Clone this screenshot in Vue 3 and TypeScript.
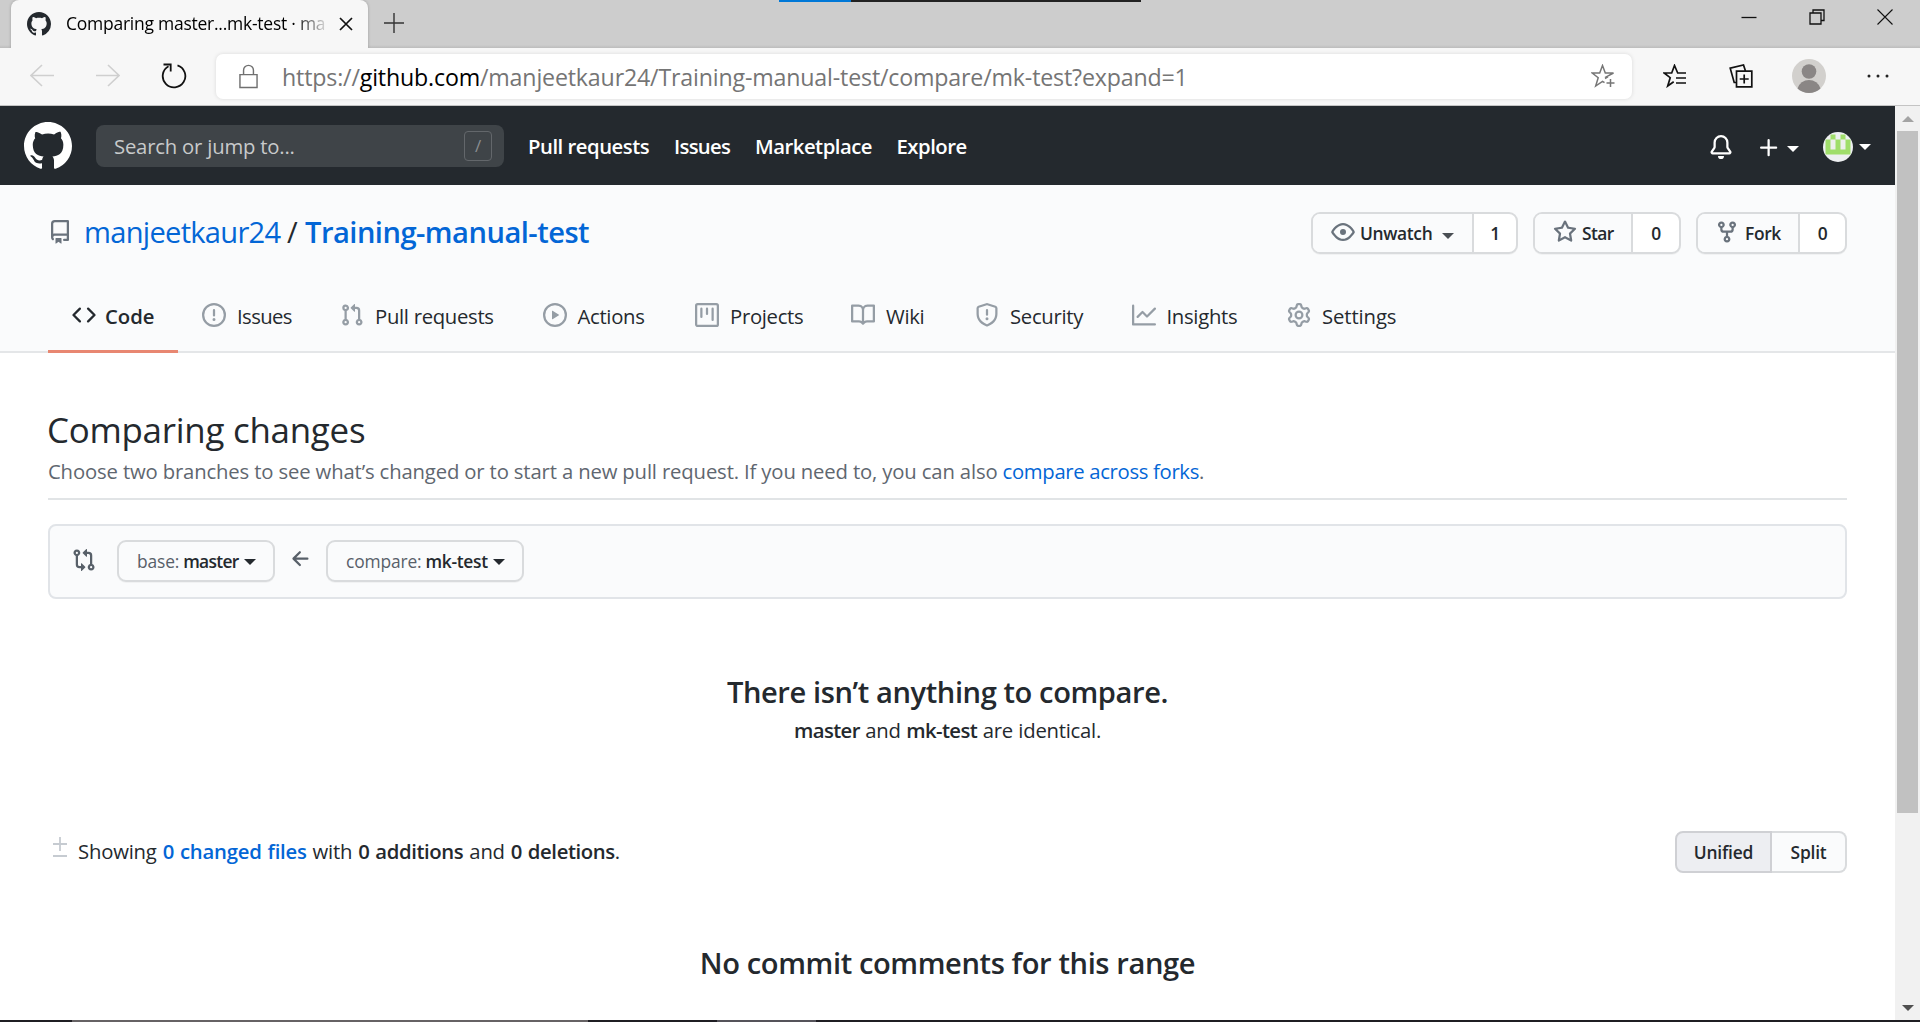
<script setup lang="ts">
interface Tab {
  label: string
  icon: string
  width: number
}

const icons: Record<string, string> = {
  github:
    'M8 0C3.58 0 0 3.58 0 8c0 3.54 2.29 6.53 5.47 7.59.4.07.55-.17.55-.38 0-.19-.01-.82-.01-1.49-2.01.37-2.53-.49-2.69-.94-.09-.23-.48-.94-.82-1.13-.28-.15-.68-.52-.01-.53.63-.01 1.08.58 1.23.82.72 1.21 1.87.87 2.33.66.07-.52.28-.87.51-1.07-1.78-.2-3.64-.89-3.64-3.95 0-.87.31-1.59.82-2.15-.08-.2-.36-1.02.08-2.12 0 0 .67-.21 2.2.82.64-.18 1.32-.27 2-.27.68 0 1.36.09 2 .27 1.53-1.04 2.2-.82 2.2-.82.44 1.1.16 1.92.08 2.12.51.56.82 1.27.82 2.15 0 3.07-1.87 3.75-3.65 3.95.29.25.54.73.54 1.48 0 1.07-.01 1.93-.01 2.2 0 .21.15.46.55.38A8.013 8.013 0 0016 8c0-4.42-3.58-8-8-8z',
  code: 'M4.72 3.22a.75.75 0 011.06 1.06L2.06 8l3.72 3.72a.75.75 0 11-1.06 1.06L.47 8.53a.75.75 0 010-1.06l4.25-4.25zm6.56 0a.75.75 0 10-1.06 1.06L13.94 8l-3.72 3.72a.75.75 0 101.06 1.06l4.25-4.25a.75.75 0 000-1.06l-4.25-4.25z',
  issue:
    'M8 1.5a6.5 6.5 0 100 13 6.5 6.5 0 000-13zM0 8a8 8 0 1116 0A8 8 0 010 8zm9 3a1 1 0 11-2 0 1 1 0 012 0zm-.25-6.25a.75.75 0 00-1.5 0v3.5a.75.75 0 001.5 0v-3.5z',
  pull: 'M7.177 3.073L9.573.677A.25.25 0 0110 .854v4.792a.25.25 0 01-.427.177L7.177 3.427a.25.25 0 010-.354zM3.75 2.5a.75.75 0 100 1.5.75.75 0 000-1.5zm-2.25.75a2.25 2.25 0 113 2.122v5.256a2.251 2.251 0 11-1.5 0V5.372A2.25 2.25 0 011.5 3.25zM11 2.5h-1V4h1a1 1 0 011 1v5.628a2.251 2.251 0 101.5 0V5A2.5 2.5 0 0011 2.5zm1 10.25a.75.75 0 111.5 0 .75.75 0 01-1.5 0zM3.75 12a.75.75 0 100 1.5.75.75 0 000-1.5z',
  play: 'M1.5 8a6.5 6.5 0 1113 0 6.5 6.5 0 01-13 0zM8 0a8 8 0 100 16A8 8 0 008 0zM6.379 5.227A.25.25 0 006 5.442v5.117a.25.25 0 00.379.214l4.264-2.559a.25.25 0 000-.428L6.379 5.227z',
  project:
    'M1.75 0A1.75 1.75 0 000 1.75v12.5C0 15.216.784 16 1.75 16h12.5A1.75 1.75 0 0016 14.25V1.75A1.75 1.75 0 0014.25 0H1.75zM1.5 1.75a.25.25 0 01.25-.25h12.5a.25.25 0 01.25.25v12.5a.25.25 0 01-.25.25H1.75a.25.25 0 01-.25-.25V1.75zM11.75 3a.75.75 0 00-.75.75v7.5a.75.75 0 001.5 0v-7.5a.75.75 0 00-.75-.75zm-8.25.75a.75.75 0 011.5 0v5.5a.75.75 0 01-1.5 0v-5.5zM8 3a.75.75 0 00-.75.75v3.5a.75.75 0 001.5 0v-3.5A.75.75 0 008 3z',
  book: 'M0 1.75A.75.75 0 01.75 1h4.253c1.227 0 2.317.59 3 1.501A3.744 3.744 0 0111.006 1h4.245a.75.75 0 01.75.75v10.5a.75.75 0 01-.75.75h-4.507a2.25 2.25 0 00-1.591.659l-.622.621a.75.75 0 01-1.06 0l-.622-.621A2.25 2.25 0 005.258 13H.75a.75.75 0 01-.75-.75V1.75zm8.755 3a2.25 2.25 0 012.25-2.25H14.5v9h-3.757c-.71 0-1.4.201-1.992.572l.004-7.322zm-1.504 7.324l.004-5.073-.002-2.253A2.25 2.25 0 005.003 2.5H1.5v9h3.757a3.75 3.75 0 011.994.574z',
  shield:
    'M7.467.133a1.75 1.75 0 011.066 0l5.25 1.68A1.75 1.75 0 0115 3.48V7c0 1.566-.32 3.182-1.303 4.682-.983 1.498-2.585 2.813-5.032 3.855a1.7 1.7 0 01-1.33 0c-2.447-1.042-4.049-2.357-5.032-3.855C1.32 10.182 1 8.566 1 7V3.48a1.75 1.75 0 011.217-1.667l5.25-1.68zm.61 1.429a.25.25 0 00-.153 0l-5.25 1.68a.25.25 0 00-.174.238V7c0 1.358.275 2.666 1.057 3.86.784 1.194 2.121 2.34 4.366 3.297a.2.2 0 00.154 0c2.245-.956 3.582-2.104 4.366-3.298C13.225 9.666 13.5 8.36 13.5 7V3.48a.25.25 0 00-.174-.237l-5.25-1.68zM9 10.5a1 1 0 11-2 0 1 1 0 012 0zm-.25-5.75a.75.75 0 10-1.5 0v3a.75.75 0 001.5 0v-3z',
  graph:
    'M1.5 1.75a.75.75 0 00-1.5 0v12.5c0 .414.336.75.75.75h14.5a.75.75 0 000-1.5H1.5V1.75zm14.28 2.53a.75.75 0 00-1.06-1.06L10 7.94 7.53 5.47a.75.75 0 00-1.06 0L3.22 8.72a.75.75 0 001.06 1.06L7 7.06l2.47 2.47a.75.75 0 001.06 0l5.25-5.25z',
  gear: 'M7.429 1.525a6.593 6.593 0 011.142 0c.036.003.108.036.137.146l.289 1.105c.147.56.55.967.997 1.189.174.086.341.183.501.29.417.278.97.423 1.53.27l1.102-.303c.11-.03.175.016.195.046.219.31.41.641.573.989.014.031.022.11-.059.19l-.815.806c-.411.406-.562.957-.53 1.456a4.588 4.588 0 010 .582c-.032.499.119 1.05.53 1.456l.815.806c.08.08.073.159.059.19a6.494 6.494 0 01-.573.99c-.02.029-.086.074-.195.045l-1.103-.303c-.559-.153-1.112-.008-1.529.27-.16.107-.327.204-.5.29-.449.222-.851.628-.998 1.189l-.289 1.105c-.029.11-.101.143-.137.146a6.613 6.613 0 01-1.142 0c-.036-.003-.108-.037-.137-.146l-.289-1.105c-.147-.56-.55-.967-.997-1.189a4.502 4.502 0 01-.501-.29c-.417-.278-.97-.423-1.53-.27l-1.102.303c-.11.03-.175-.016-.195-.046a6.492 6.492 0 01-.573-.989c-.014-.031-.022-.11.059-.19l.815-.806c.411-.406.562-.957.53-1.456a4.587 4.587 0 010-.582c.032-.499-.119-1.05-.53-1.456l-.815-.806c-.08-.08-.073-.159-.059-.19a6.44 6.44 0 01.573-.99c.02-.029.086-.075.195-.045l1.103.303c.559.153 1.112.008 1.529-.27.16-.107.327-.204.5-.29.449-.222.851-.628.998-1.189l.289-1.105c.029-.11.101-.143.137-.146zM8 0c-.236 0-.47.01-.701.03-.743.065-1.29.615-1.458 1.261l-.29 1.106c-.017.066-.078.158-.211.224a5.994 5.994 0 00-.668.386c-.123.082-.233.09-.3.071L3.27 2.776c-.644-.177-1.392.02-1.82.63a7.977 7.977 0 00-.704 1.217c-.315.675-.111 1.422.363 1.891l.815.806c.05.048.098.147.088.294a6.084 6.084 0 000 .772c.01.147-.038.246-.088.294l-.815.806c-.474.469-.678 1.216-.363 1.891.2.428.436.835.704 1.218.428.609 1.176.806 1.82.63l1.103-.303c.066-.019.176-.011.299.071.213.143.436.272.668.386.133.066.194.158.212.224l.289 1.106c.169.646.715 1.196 1.458 1.26a8.094 8.094 0 001.402 0c.743-.064 1.29-.614 1.458-1.26l.29-1.106c.017-.066.078-.158.211-.224a5.98 5.98 0 00.668-.386c.123-.082.233-.09.3-.071l1.102.302c.644.177 1.392-.02 1.82-.63.268-.382.505-.789.704-1.217.315-.675.111-1.422-.364-1.891l-.814-.806c-.05-.048-.098-.147-.088-.294a6.1 6.1 0 000-.772c-.01-.147.039-.246.088-.294l.814-.806c.475-.469.679-1.216.364-1.891a7.992 7.992 0 00-.704-1.218c-.428-.609-1.176-.806-1.82-.63l-1.103.303c-.066.019-.176.011-.299-.071a5.991 5.991 0 00-.668-.386c-.133-.066-.194-.158-.212-.224L10.16 1.29C9.99.645 9.444.095 8.701.031A8.094 8.094 0 008 0zm1.5 8a1.5 1.5 0 11-3 0 1.5 1.5 0 013 0zM11 8a3 3 0 11-6 0 3 3 0 016 0z',
  repo: 'M2 2.5A2.5 2.5 0 014.5 0h8.75a.75.75 0 01.75.75v12.5a.75.75 0 01-.75.75h-2.5a.75.75 0 110-1.5h1.75v-2h-8a1 1 0 00-.714 1.7.75.75 0 01-1.072 1.05A2.495 2.495 0 012 11.5v-9zm10.5-1V9h-8c-.356 0-.694.074-1 .208V2.5a1 1 0 011-1h8zM5 12.25v3.25a.25.25 0 00.4.2l1.45-1.087a.25.25 0 01.3 0L8.6 15.7a.25.25 0 00.4-.2v-3.25a.25.25 0 00-.25-.25h-3.5a.25.25 0 00-.25.25z',
  eye: 'M1.679 7.932c.412-.621 1.242-1.75 2.366-2.717C5.175 4.242 6.527 3.5 8 3.5c1.473 0 2.824.742 3.955 1.715 1.124.967 1.954 2.096 2.366 2.717a.119.119 0 010 .136c-.412.621-1.242 1.75-2.366 2.717C10.825 11.758 9.473 12.5 8 12.5c-1.473 0-2.824-.742-3.955-1.715C2.92 9.818 2.09 8.69 1.679 8.068a.119.119 0 010-.136zM8 2c-1.981 0-3.67.992-4.933 2.078C1.797 5.169.88 6.423.43 7.1a1.619 1.619 0 000 1.798c.45.678 1.367 1.932 2.637 3.024C4.329 13.008 6.019 14 8 14c1.981 0 3.67-.992 4.933-2.078 1.27-1.091 2.187-2.345 2.637-3.023a1.619 1.619 0 000-1.798c-.45-.678-1.367-1.932-2.637-3.023C11.671 2.992 9.981 2 8 2zm0 8a2 2 0 100-4 2 2 0 000 4z',
  star: 'M8 .25a.75.75 0 01.673.418l1.882 3.815 4.21.612a.75.75 0 01.416 1.279l-3.046 2.97.719 4.192a.75.75 0 01-1.088.791L8 12.347l-3.766 1.98a.75.75 0 01-1.088-.79l.72-4.194L.818 6.374a.75.75 0 01.416-1.28l4.21-.611L7.327.668A.75.75 0 018 .25zm0 2.445L6.615 5.5a.75.75 0 01-.564.41l-3.097.45 2.24 2.184a.75.75 0 01.216.664l-.528 3.084 2.769-1.456a.75.75 0 01.698 0l2.77 1.456-.53-3.084a.75.75 0 01.216-.664l2.24-2.183-3.096-.45a.75.75 0 01-.564-.41L8 2.694v.001z',
  fork: 'M5 3.25a.75.75 0 11-1.5 0 .75.75 0 011.5 0zm0 2.122a2.25 2.25 0 10-1.5 0v.878A2.25 2.25 0 005.75 8.5h1.5v2.128a2.251 2.251 0 101.5 0V8.5h1.5a2.25 2.25 0 002.25-2.25v-.878a2.25 2.25 0 10-1.5 0v.878a.75.75 0 01-.75.75h-4.5A.75.75 0 015 6.25v-.878zm3.75 7.378a.75.75 0 11-1.5 0 .75.75 0 011.5 0zm3-8.75a.75.75 0 100-1.5.75.75 0 000 1.5z',
  bell: 'M8 16a2 2 0 001.985-1.75c.017-.137-.097-.25-.235-.25h-3.5c-.138 0-.252.113-.235.25A2 2 0 008 16zM8 1.5A3.5 3.5 0 004.5 5v2.947c0 .346-.102.683-.294.97l-1.703 2.556a.018.018 0 00-.003.01l.001.006c0 .002.002.004.004.006a.017.017 0 00.006.004l.007.001h10.964l.007-.001a.016.016 0 00.006-.004.016.016 0 00.004-.006l.001-.007a.017.017 0 00-.003-.01l-1.703-2.554a1.75 1.75 0 01-.294-.97V5A3.5 3.5 0 008 1.5zM3 5a5 5 0 0110 0v2.947c0 .05.015.098.042.139l1.703 2.555A1.518 1.518 0 0113.482 13H2.518a1.518 1.518 0 01-1.263-2.36l1.703-2.554A.25.25 0 003 7.947V5z',
  plus: 'M7.75 2a.75.75 0 01.75.75V7h4.25a.75.75 0 110 1.5H8.5v4.25a.75.75 0 11-1.5 0V8.5H2.75a.75.75 0 010-1.5H7V2.75A.75.75 0 017.75 2z',
  arrowLeft:
    'M7.78 12.53a.75.75 0 01-1.06 0L2.47 8.28a.75.75 0 010-1.06l4.25-4.25a.75.75 0 011.06 1.06L4.81 7h7.44a.75.75 0 010 1.5H4.81l2.97 2.97a.75.75 0 010 1.06z',
  compare:
    'M9.573.677L7.177 3.073a.25.25 0 000 .354l2.396 2.396A.25.25 0 0010 5.646V4h1a1 1 0 011 1v5.628a2.251 2.251 0 101.5 0V5A2.5 2.5 0 0011 2.5h-1V.854a.25.25 0 00-.427-.177zM6 12v-1.646a.25.25 0 01.427-.177l2.396 2.396a.25.25 0 010 .354l-2.396 2.396A.25.25 0 016 15.146V13.5H5A2.5 2.5 0 012.5 11V5.372a2.25 2.25 0 111.5 0V11a1 1 0 001 1h1zm6.75 0a.75.75 0 100 1.5.75.75 0 000-1.5zM4 3.25a.75.75 0 11-1.5 0 .75.75 0 011.5 0z',
}

const tabs: Tab[] = [
  { label: 'Code', icon: 'code', width: 130 },
  { label: 'Issues', icon: 'issue', width: 138 },
  { label: 'Pull requests', icon: 'pull', width: 202.5 },
  { label: 'Actions', icon: 'play', width: 152.5 },
  { label: 'Projects', icon: 'project', width: 156 },
  { label: 'Wiki', icon: 'book', width: 124 },
  { label: 'Security', icon: 'shield', width: 156.5 },
  { label: 'Insights', icon: 'graph', width: 155.5 },
  { label: 'Settings', icon: 'gear', width: 133 },
]
</script>

<template>
  <div class="window">
    <div class="titlebar">
      <div class="recording"><i></i></div>
      <div class="browser-tab">
        <svg class="favicon" viewBox="0 0 16 16"><path :d="icons.github" /></svg>
        <span class="tab-title">Comparing master...mk-test · ma</span>
        <svg class="tab-close" viewBox="0 0 14 14"><path d="M1 1l12 12M13 1L1 13" /></svg>
      </div>
      <svg class="new-tab" viewBox="0 0 20 20"><path d="M10 0v20M0 10h20" /></svg>
      <div class="controls">
        <svg viewBox="0 0 16 16"><path d="M.5 8.5h15" /></svg>
        <svg viewBox="0 0 16 16"><path d="M1 4h11v11H1zM4 4V1h11v10.500h-3" /></svg>
        <svg class="thin" viewBox="0 0 16 16"><path d="M.5 .5l15 15M15.500 .5l-15 15" /></svg>
      </div>
    </div>

    <div class="toolbar">
      <svg class="nav-arrow" viewBox="0 0 24 24"><path d="M24 11.500H1M12 1L1 11.500 12 22" /></svg>
      <svg class="nav-arrow" viewBox="0 0 24 24"><path d="M0 11.500h23M12 1l11 10.500L12 22" /></svg>
      <svg class="reload" viewBox="0 0 26 26">
        <path d="M7.500 3.200A11.300 11.300 0 1 0 16.500 2.300" /><path d="M2.500 1.500h7.200v7" />
      </svg>
      <div class="address">
        <svg class="lock" viewBox="0 0 20 26"><path d="M1 11h18v13.500H1zM4.800 11V6.500a5.200 5.200 0 0 1 10.400 0V11" /></svg>
        <span class="url">https://<b>github.com</b>/manjeetkaur24/Training-manual-test/compare/mk-test?expand=1</span>
        <svg class="fav-add" viewBox="0 0 24 24">
          <path d="M14 14.500l2-1.200-.8-.4L22.500 9H14.300L11.500 1.500 8.700 9H1.200l6 4.700L4.700 22l6.800-4.700 2 1.300M19.500 15v8M15.500 19h8" />
        </svg>
      </div>
      <svg class="tool favorites" viewBox="0 0 24 24">
        <path d="M23 9h-8.300L11.500 1.500 8.700 9H1.200l6 4.700L4.700 22l6-4.300M13 14h10M13 19h10" />
      </svg>
      <svg class="tool collections" viewBox="0 0 24 24">
        <path d="M7.500 7.200h15.300v15.600H7.500zM15.200 10.500v9M10.700 15h9M7.500 18.500H5.200L1.200 4.200 14.500 1l2 6" />
      </svg>
      <svg class="profile" viewBox="0 0 34 34">
        <circle cx="17" cy="17" r="17" fill="#d2d0cd" />
        <circle cx="17" cy="12.500" r="7.300" fill="#8a8685" />
        <path d="M5.500 29.500a12 12 0 0 1 23 0A17 17 0 0 1 17 34a17 17 0 0 1-11.500-4.500z" fill="#8a8685" />
      </svg>
      <svg class="more" viewBox="0 0 22 4">
        <circle cx="2" cy="2" r="1.500" /><circle cx="11" cy="2" r="1.500" /><circle cx="20" cy="2" r="1.500" />
      </svg>
    </div>

    <div class="viewport">
      <div class="page">
        <header class="site-header">
          <svg class="logo" viewBox="0 0 16 16"><path :d="icons.github" /></svg>
          <div class="search"><span>Search or jump to...</span><kbd>/</kbd></div>
          <nav class="site-nav">
            <a class="n1">Pull requests</a><a class="n2">Issues</a><a class="n3">Marketplace</a><a class="n4">Explore</a>
          </nav>
          <svg class="oct bell" viewBox="0 0 16 16"><path :d="icons.bell" /></svg>
          <svg class="oct plus" viewBox="0 0 16 16"><path :d="icons.plus" /></svg>
          <i class="caret plus-caret"></i>
          <svg class="avatar" viewBox="0 0 30 30">
            <path
              fill="#a0de6b"
              d="M7.500 2.500H12.500V7.500H17.500V2.500H22.500V7.500H27.500V22.500H2.500V7.500H7.500z"
            />
            <path fill="#eef0ee" d="M7.500 7.500h5v10h-5zM17.500 7.500h5v10h-5z" />
          </svg>
          <i class="caret avatar-caret"></i>
        </header>

        <section class="repo-head">
          <div class="repo-row">
            <svg class="oct repo-icon" viewBox="0 0 16 16"><path :d="icons.repo" /></svg>
            <h1><a class="owner">manjeetkaur24</a><span class="sep">/</span><a class="repo">Training-manual-test</a></h1>
            <div class="social watch">
              <button><svg class="oct" viewBox="0 0 16 16"><path :d="icons.eye" /></svg><span>Unwatch</span><i class="caret"></i></button>
              <a>1</a>
            </div>
            <div class="social star">
              <button><svg class="oct" viewBox="0 0 16 16"><path :d="icons.star" /></svg><span>Star</span></button>
              <a>0</a>
            </div>
            <div class="social fork">
              <button><svg class="oct" viewBox="0 0 16 16"><path :d="icons.fork" /></svg><span>Fork</span></button>
              <a>0</a>
            </div>
          </div>
          <nav class="tabs">
            <a
              v-for="(tab, i) in tabs"
              :key="tab.label"
              :class="['tab', 'tab-' + tab.icon, { active: i === 0 }]"
              :style="{ width: tab.width + 'px' }"
            >
              <svg class="oct" viewBox="0 0 16 16"><path :d="icons[tab.icon]" /></svg>
              <span>{{ tab.label }}</span>
            </a>
          </nav>
        </section>

        <main>
          <h2 class="title">Comparing changes</h2>
          <p class="lead">
            Choose two branches to see what’s changed or to start a new pull request. If you need to, you can also
            <a>compare across forks</a>.
          </p>
          <div class="range">
            <svg class="oct" viewBox="0 0 16 16"><path :d="icons.compare" /></svg>
            <button class="base"><span>base:</span><b>master</b><i class="caret"></i></button>
            <svg class="oct arrow" viewBox="0 0 16 16"><path :d="icons.arrowLeft" /></svg>
            <button class="head"><span>compare:</span><b>mk-test</b><i class="caret"></i></button>
          </div>
          <div class="blank">
            <h3>There isn’t anything to compare.</h3>
            <p><b>master</b> and <b>mk-test</b> are identical.</p>
          </div>
          <div class="toc">
            <svg class="diff" viewBox="0 0 16 20"><path d="M8 0v14M1 7h14M1 19h14" /></svg>
            <p>Showing <a>0 changed files</a> with <b>0 additions</b> and <b>0 deletions</b>.</p>
            <div class="toggle"><button class="selected">Unified</button><button>Split</button></div>
          </div>
          <h3 class="comments">No commit comments for this range</h3>
        </main>
      </div>
      <div class="scrollbar">
        <i class="up"></i>
        <div class="thumb"></div>
        <i class="down"></i>
      </div>
    </div>
    <div class="bottom-edge"><i class="long"></i><i class="short"></i></div>
  </div>
</template>

<style>
body {
  margin: 0;
  overflow: hidden;
}
</style>

<style scoped>
* {
  box-sizing: border-box;
}
.window {
  width: 1920px;
  height: 1022px;
  display: flex;
  flex-direction: column;
  overflow: hidden;
  background: #fff;
  color: #24292e;
  font-family: 'Open Sans', 'Noto Sans', sans-serif;
  font-size: 20.3px;
  letter-spacing: -0.2px;
}
svg {
  display: block;
  flex: none;
}
h1,
h2,
h3,
p {
  margin: 0;
  white-space: nowrap;
}
b {
  font-weight: 600;
}
button {
  font: inherit;
  letter-spacing: inherit;
  color: inherit;
  margin: 0;
}
.oct {
  width: 24px;
  height: 24px;
  fill: currentColor;
  fill-rule: evenodd;
}
.caret {
  flex: none;
  width: 0;
  height: 0;
  border: 6px solid transparent;
  border-top-color: currentColor;
  border-bottom: 0;
}

/* browser chrome */
.titlebar {
  position: relative;
  height: 48px;
  flex: none;
  display: flex;
  align-items: center;
  background: linear-gradient(#cdcdcd 45px, #bcbcbc);
}
.recording {
  position: absolute;
  left: 779px;
  top: 0;
  width: 362px;
  height: 2px;
  background: #222;
}
.recording i {
  display: block;
  width: 72px;
  height: 2px;
  background: #0078d7;
}
.browser-tab {
  width: 357px;
  height: 48px;
  margin-left: 11px;
  padding-left: 16px;
  display: flex;
  align-items: center;
  background: #f7f7f7;
  border-radius: 8px 8px 0 0;
  box-shadow: 0 0 3px rgba(0, 0, 0, 0.25);
  clip-path: inset(0 -4px 0 -4px);
}
.favicon {
  width: 24px;
  height: 24px;
  fill: #24292e;
}
.tab-title {
  width: 259px;
  margin: 0 0 2px 15px;
  white-space: nowrap;
  font-size: 17.5px;
  line-height: 30px;
  letter-spacing: -0.25px;
  color: #000;
  mask-image: linear-gradient(90deg, #000 228px, transparent 264px);
}
.tab-close {
  width: 14px;
  height: 14px;
  margin-left: 14px;
  fill: none;
  stroke: #111;
  stroke-width: 1.7;
}
.new-tab {
  width: 20px;
  height: 20px;
  margin: 0 0 2px 16px;
  fill: none;
  stroke: #333;
  stroke-width: 1.4;
}
.controls {
  display: flex;
  gap: 52px;
  margin: 0 27px 14px auto;
}
.controls svg {
  width: 16px;
  height: 16px;
  fill: none;
  stroke: #111;
  stroke-width: 1.3;
}
.controls .thin {
  stroke-width: 1.1;
}
.toolbar {
  height: 58px;
  flex: none;
  display: flex;
  align-items: center;
  padding: 0 0 1px 30px;
  background: #f7f7f7;
  border-bottom: 1px solid #c4c4c4;
}
.nav-arrow {
  width: 24px;
  height: 24px;
  margin-right: 42px;
  fill: none;
  stroke: #cfcfcf;
  stroke-width: 1.6;
}
.reload {
  width: 26px;
  height: 26px;
  margin-left: -1px;
  fill: none;
  stroke: #111;
  stroke-width: 1.8;
}
.address {
  width: 1416px;
  height: 45px;
  margin-left: 29px;
  padding: 0 17px 0 23px;
  display: flex;
  align-items: center;
  background: #fff;
  border-radius: 7px;
  box-shadow: 0 0 4px rgba(0, 0, 0, 0.12);
}
.lock {
  width: 19px;
  height: 25px;
  fill: none;
  stroke: #707070;
  stroke-width: 1.5;
}
.url {
  margin-left: 24px;
  padding-top: 2px;
  font-size: 23.2px;
  line-height: 46px;
  letter-spacing: -0.17px;
  color: #757575;
}
.url b {
  font-weight: 400;
  color: #000;
}
.fav-add {
  width: 24px;
  height: 24px;
  margin-left: auto;
  fill: none;
  stroke: #767676;
  stroke-width: 1.5;
}
.tool {
  width: 24px;
  height: 24px;
  fill: none;
  stroke: #111;
  stroke-width: 1.7;
}
.favorites {
  margin-left: 31px;
}
.collections {
  margin-left: 42px;
}
.profile {
  width: 34px;
  height: 34px;
  margin-left: 39px;
}
.more {
  width: 22px;
  height: 4px;
  margin-left: 41px;
  fill: #222;
}

/* page */
.viewport {
  flex: 1;
  display: flex;
  min-height: 0;
}
.page {
  width: 1895px;
}
.site-header {
  height: 79px;
  display: flex;
  align-items: center;
  padding-left: 24px;
  background: #24292e;
  color: #fff;
}
.logo {
  width: 48px;
  height: 48px;
  fill: #fff;
}
.search {
  width: 408px;
  height: 42px;
  margin-left: 24px;
  padding: 0 12px 0 18px;
  display: flex;
  align-items: center;
  justify-content: space-between;
  background: #3f4448;
  border-radius: 8px;
  color: #c8cacb;
}
.search span {
  padding-top: 1px;
}
kbd {
  width: 28px;
  height: 30px;
  border: 1px solid #63676b;
  border-radius: 4px;
  font: 17px/27px 'Open Sans', sans-serif;
  text-align: center;
  color: #8a8e91;
}
.site-nav {
  display: flex;
  margin-left: 24px;
  font-weight: 600;
  line-height: 42px;
  letter-spacing: -0.48px;
}
.site-nav a {
  white-space: nowrap;
}
.n1 {
  width: 146px;
}
.n2 {
  width: 81px;
  letter-spacing: -0.7px;
}
.n3 {
  width: 141.5px;
}
.bell {
  margin: 2px 0 0 auto;
}
.plus {
  margin: 4px 0 0 24px;
}
.plus-caret {
  margin: 7px 0 0 6px;
}
.avatar {
  width: 30px;
  height: 30px;
  margin: 3px 0 0 24px;
  border-radius: 50%;
  background: #eef0f2;
}
.avatar-caret {
  margin: 3px 24px 0 6px;
}
.repo-head {
  height: 168px;
  background: #fafbfc;
  border-bottom: 2px solid #e4e6e8;
  padding: 27px 48px 0;
}
.repo-row {
  height: 42px;
  display: flex;
  align-items: center;
}
.repo-icon {
  color: #6a737d;
  margin-bottom: 2px;
}
h1 {
  display: flex;
  flex: 1;
  margin: 0 0 2px 12px;
  font-size: 29.1px;
  line-height: 40px;
  font-weight: 400;
}
.owner {
  width: 203px;
  color: #0366d6;
  letter-spacing: -0.72px;
}
.sep {
  width: 18px;
}
.repo {
  color: #0366d6;
  font-weight: 600;
  letter-spacing: -0.52px;
}
.social {
  height: 42px;
  display: flex;
  border: 2px solid #d9dbdd;
  border-radius: 9px;
  background: #fff;
  box-shadow: 0 1px 0 rgba(27, 31, 35, 0.04);
  overflow: hidden;
  font-size: 17.4px;
  font-weight: 600;
  letter-spacing: -0.35px;
}
.social button {
  display: flex;
  align-items: center;
  border: 0;
  border-right: 2px solid #d9dbdd;
  background: #fafbfc;
  padding: 0 0 0 18px;
}
.social .oct {
  color: #6a737d;
  margin-bottom: 2px;
}
.social span {
  margin-left: 5px;
}
.social a {
  flex: 1;
  line-height: 39px;
  text-align: center;
}
.watch {
  width: 207px;
}
.watch button {
  width: 161px;
}
.watch .caret {
  margin: 5px 0 0 10px;
  color: #4a4f54;
}
.star {
  width: 148px;
  margin-left: 15px;
}
.star button {
  width: 98px;
}
.star span {
  letter-spacing: -0.6px;
}
.fork {
  width: 151px;
  margin-left: 15px;
}
.fork button {
  width: 102px;
  padding-left: 17px;
}
.fork span {
  margin-left: 6px;
}
.tabs {
  display: flex;
  margin-top: 24px;
  height: 75px;
  letter-spacing: -0.3px;
}
.tab {
  flex: none;
  display: flex;
  padding: 25px 0 0 24px;
  line-height: 26px;
  white-space: nowrap;
}
.tab .oct {
  color: #959da5;
}
.tab span {
  margin-left: 11px;
}
.tab.tab-issue {
  letter-spacing: -0.6px;
}
.tab.tab-gear {
  letter-spacing: -0.1px;
}
.tab.active {
  border-bottom: 3px solid #e88771;
  font-weight: 600;
  letter-spacing: 0;
}
.active .oct {
  color: #24292e;
}
.tab.active span {
  margin-left: 9px;
}

main {
  padding: 50px 48px 0;
}
.title {
  font-size: 34.9px;
  line-height: 54px;
  font-weight: 400;
  letter-spacing: -0.25px;
  margin-left: -1px;
}
.lead {
  height: 43px;
  border-bottom: 2px solid #e1e4e6;
  line-height: 28px;
  letter-spacing: -0.15px;
  color: #5f6770;
}
a {
  text-decoration: none;
}
.lead a,
.toc a {
  color: #0366d6;
}
.lead a {
  letter-spacing: -0.33px;
}
.range {
  display: flex;
  height: 75px;
  margin-top: 24px;
  padding: 14px 22px;
  border: 2px solid #e1e4e8;
  border-radius: 8px;
  background: #fafbfc;
  font-size: 17.4px;
}
.range .oct {
  margin-top: 8px;
  color: #586069;
}
.range .arrow {
  margin: 7px 13px 0 14px;
}
.range button {
  height: 42px;
  display: flex;
  align-items: center;
  border: 2px solid #d9dbdd;
  border-radius: 9px;
  background: #fafbfc;
  box-shadow: 0 1px 0 rgba(27, 31, 35, 0.04);
  padding: 0 0 0 18px;
}
.range button span {
  color: #586069;
  letter-spacing: -0.15px;
}
.range button b {
  margin-left: 4px;
  letter-spacing: -0.7px;
}
.range button .caret {
  margin-left: 5px;
  margin-top: 1px;
}
.range .base {
  width: 158px;
  margin-left: 21px;
}
.range .head {
  width: 198px;
}
.range .head b {
  letter-spacing: -0.3px;
}
.blank {
  margin-top: 71px;
  text-align: center;
}
h3 {
  font-size: 29.1px;
  line-height: 44px;
  font-weight: 600;
  letter-spacing: -0.41px;
}
.blank p {
  line-height: 32px;
  letter-spacing: -0.25px;
  word-spacing: 0.5px;
}
.blank b {
  letter-spacing: -0.6px;
}
.toc {
  display: flex;
  margin-top: 85px;
  height: 42px;
}
.diff {
  width: 16px;
  height: 20px;
  margin: 6px 10px 0 4px;
  fill: none;
  stroke: #c6cbd1;
  stroke-width: 1.8;
}
.toc p {
  line-height: 41px;
  letter-spacing: -0.2px;
  word-spacing: 0.9px;
}
.toc a {
  font-weight: 600;
  letter-spacing: -0.22px;
}
.toc b {
  letter-spacing: -0.38px;
}
.toggle {
  display: flex;
  margin-left: auto;
  font-size: 17.4px;
  font-weight: 600;
}
.toggle button {
  width: 75px;
  height: 42px;
  padding: 0;
  border: 2px solid #d9dbdd;
  border-left: 0;
  border-radius: 0 8px 8px 0;
  background: #fafbfc;
}
.toggle .selected {
  width: 97px;
  border: 2px solid #cfd0d4;
  border-radius: 8px 0 0 8px;
  background: #edeef2;
}
.comments {
  margin-top: 68px;
  text-align: center;
  letter-spacing: -0.39px;
}

.scrollbar {
  width: 25px;
  display: flex;
  flex-direction: column;
  align-items: center;
  padding: 10px 0 9px;
  background: #f1f1f1;
}
.scrollbar i {
  width: 0;
  height: 0;
  border: 6px solid transparent;
}
.scrollbar .up {
  border-top: 0;
  border-bottom-color: #a3a3a3;
}
.scrollbar .down {
  margin-top: auto;
  border-bottom: 0;
  border-top-color: #505050;
}
.thumb {
  width: 21px;
  height: 682px;
  margin-top: 9px;
  background: #c1c1c1;
}
.bottom-edge {
  height: 2px;
  flex: none;
  display: flex;
  background: #1f1e23;
}
.long {
  width: 516px;
  margin-left: 72px;
  background: #666264;
}
.short {
  width: 99px;
  margin-left: 129px;
  background: #55535a;
}
</style>
